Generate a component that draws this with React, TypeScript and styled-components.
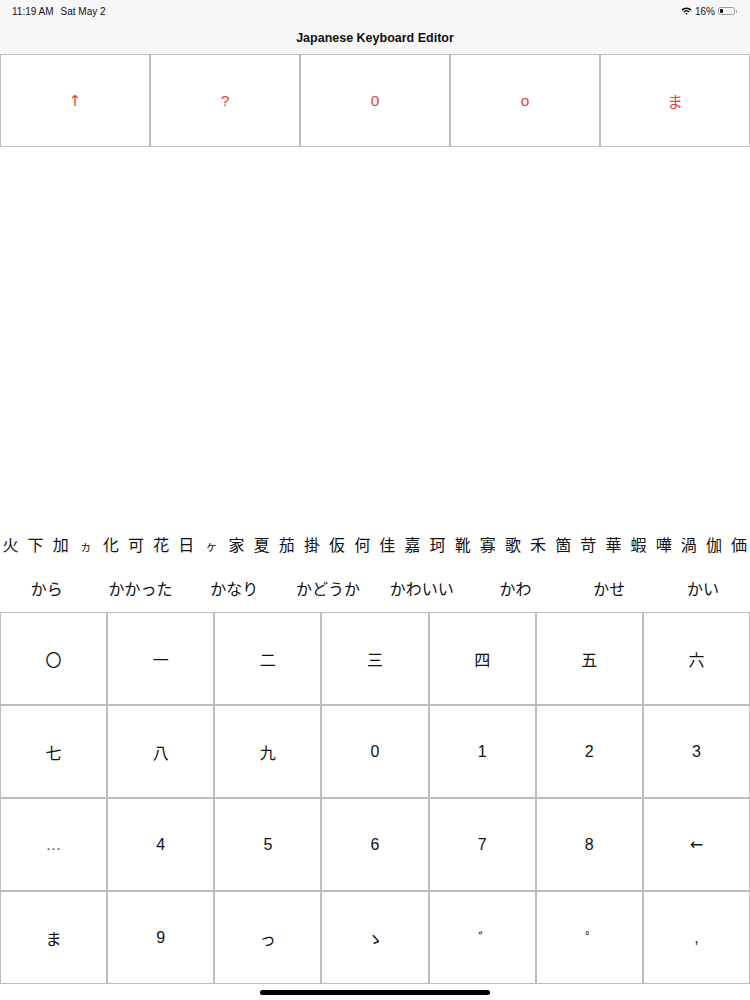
import styled, { createGlobalStyle } from "styled-components";

const GlobalStyle = createGlobalStyle`
  html, body {
    margin: 0;
    padding: 0;
    background: #ffffff;
  }
  body {
    font-family: "Liberation Sans", "Noto Sans CJK JP", sans-serif;
    color: #111;
  }
`;

const topKeys = ["↑", "?", "0", "o", "ま"];

const kanji = [
  "火", "下", "加", "ヵ", "化", "可", "花", "日", "ヶ", "家", "夏", "茄", "掛", "仮", "何",
  "佳", "嘉", "珂", "靴", "寡", "歌", "禾", "箇", "苛", "華", "蝦", "嘩", "渦", "伽", "価",
];

const candidates = ["から", "かかった", "かなり", "かどうか", "かわいい", "かわ", "かせ", "かい"];

const keyRows = [
  ["〇", "一", "二", "三", "四", "五", "六"],
  ["七", "八", "九", "0", "1", "2", "3"],
  ["…", "4", "5", "6", "7", "8", "←"],
  ["ま", "9", "っ", "ゝ", "ﾞ", "ﾟ", ","],
];

const arrows = ["↑", "←"];

const App = () => {
  return (
    <>
      <GlobalStyle />
      <Screen>
        <StatusBar>
          <StatusLeft>
            <span>11:19 AM</span>
            <span>Sat May 2</span>
          </StatusLeft>
          <StatusRight>
            <svg width="11" height="8" viewBox="0 0 11 8">
              <path d="M0.3 2.6 A7.5 7.5 0 0 1 10.7 2.6 L9.6 3.7 A6 6 0 0 0 1.4 3.7 Z" fill="#111" />
              <path d="M2.2 4.5 A4.8 4.8 0 0 1 8.8 4.5 L7.7 5.6 A3.3 3.3 0 0 0 3.3 5.6 Z" fill="#111" />
              <path d="M4.2 6.5 A2 2 0 0 1 6.8 6.5 L5.5 7.8 Z" fill="#111" />
            </svg>
            <span>16%</span>
            <Battery>
              <BatteryLevel />
            </Battery>
          </StatusRight>
        </StatusBar>
        <NavBar>Japanese Keyboard Editor</NavBar>

        <TopGrid>
          {topKeys.map((k, i) => (
            <TopKey key={i} $arrow={arrows.includes(k)}>{k}</TopKey>
          ))}
        </TopGrid>

        <Blank />

        <KanjiRow>
          {kanji.map((c, i) => (
            <KanjiChar key={i} $small={c === "ヵ" || c === "ヶ"}>{c}</KanjiChar>
          ))}
        </KanjiRow>

        <CandidateRow>
          {candidates.map((c) => (
            <Candidate key={c}>{c}</Candidate>
          ))}
        </CandidateRow>

        <KeyGrid>
          {keyRows.flat().map((k, i) => (
            <Key key={i} $faint={k === "…"} $arrow={arrows.includes(k)}>{k}</Key>
          ))}
        </KeyGrid>

        <HomeArea>
          <HomeIndicator />
        </HomeArea>
      </Screen>
    </>
  );
};

const Screen = styled.div`
  width: 750px;
  height: 1000px;
  display: flex;
  flex-direction: column;
  overflow: hidden;
`;

// Status bar
const StatusBar = styled.div`
  height: 22px;
  padding: 0 12px 0 12px;
  display: flex;
  align-items: center;
  justify-content: space-between;
  background: #f7f7f8;
  font-size: 10px;
  color: #111;
`;

const StatusLeft = styled.div`
  display: flex;
  gap: 7px;
`;

const StatusRight = styled.div`
  display: flex;
  align-items: center;
  gap: 3px;
`;

const Battery = styled.div`
  position: relative;
  width: 17px;
  height: 8px;
  border: 1px solid #9a9a9a;
  border-radius: 2.5px;
  padding: 1px;
  box-sizing: border-box;
  margin-right: 3px;

  &::after {
    content: "";
    position: absolute;
    right: -3px;
    top: 1.5px;
    width: 1.5px;
    height: 3px;
    background: #9a9a9a;
    border-radius: 0 1px 1px 0;
  }
`;

const BatteryLevel = styled.div`
  width: 3px;
  height: 100%;
  background: #111;
  border-radius: 1px;
`;

const NavBar = styled.div`
  height: 32px;
  display: flex;
  align-items: center;
  justify-content: center;
  background: #f7f7f8;
  font-size: 12.5px;
  font-weight: 600;
  padding-bottom: 1px;
  box-sizing: border-box;
`;

// Top keys
const TopGrid = styled.div`
  display: grid;
  grid-template-columns: repeat(5, 1fr);
  gap: 2px;
  background: #bdbdbd;
  border: 1px solid #bdbdbd;
`;

const TopKey = styled.div<{ $arrow?: boolean }>`
  height: 91px;
  display: flex;
  align-items: center;
  justify-content: center;
  background: #ffffff;
  color: #e2413f;
  font-family: ${(p) => (p.$arrow ? '"DejaVu Sans", sans-serif' : 'inherit')};
  font-size: 15.5px;
`;

const Blank = styled.div`
  flex: 1;
`;

// Suggestions
const KanjiRow = styled.div`
  height: 40px;
  display: flex;
  align-items: center;
  justify-content: space-between;
  padding: 0 1px;
  font-family: "Noto Sans CJK JP", sans-serif;
  font-size: 16px;
  color: #111;
`;

const KanjiChar = styled.span<{ $small?: boolean }>`
  width: 19px;
  text-align: center;
  font-size: ${(p) => (p.$small ? "12px" : "inherit")};
  padding-top: ${(p) => (p.$small ? "3px" : "0")};
`;

const CandidateRow = styled.div`
  height: 48px;
  display: grid;
  grid-template-columns: repeat(8, 1fr);
  align-items: center;
  font-family: "Noto Sans CJK JP", sans-serif;
  font-size: 16px;
  color: #111;
`;

const Candidate = styled.span`
  text-align: center;
`;

// Keyboard
const KeyGrid = styled.div`
  display: grid;
  grid-template-columns: repeat(7, 1fr);
  gap: 2px;
  background: #bdbdbd;
  border: 1px solid #bdbdbd;
`;

const Key = styled.div<{ $faint?: boolean; $arrow?: boolean }>`
  height: 91px;
  display: flex;
  align-items: center;
  justify-content: center;
  background: #ffffff;
  font-family: ${(p) =>
    p.$arrow ? '"DejaVu Sans", sans-serif' : '"Liberation Sans", "Noto Sans CJK JP", sans-serif'};
  font-size: 16px;
  color: ${(p) => (p.$faint ? "#555" : "#111")};
`;

const HomeArea = styled.div`
  height: 16px;
  display: flex;
  justify-content: center;
  align-items: center;
`;

const HomeIndicator = styled.div`
  width: 230px;
  height: 5px;
  border-radius: 3px;
  background: #000;
`;

export default App;
